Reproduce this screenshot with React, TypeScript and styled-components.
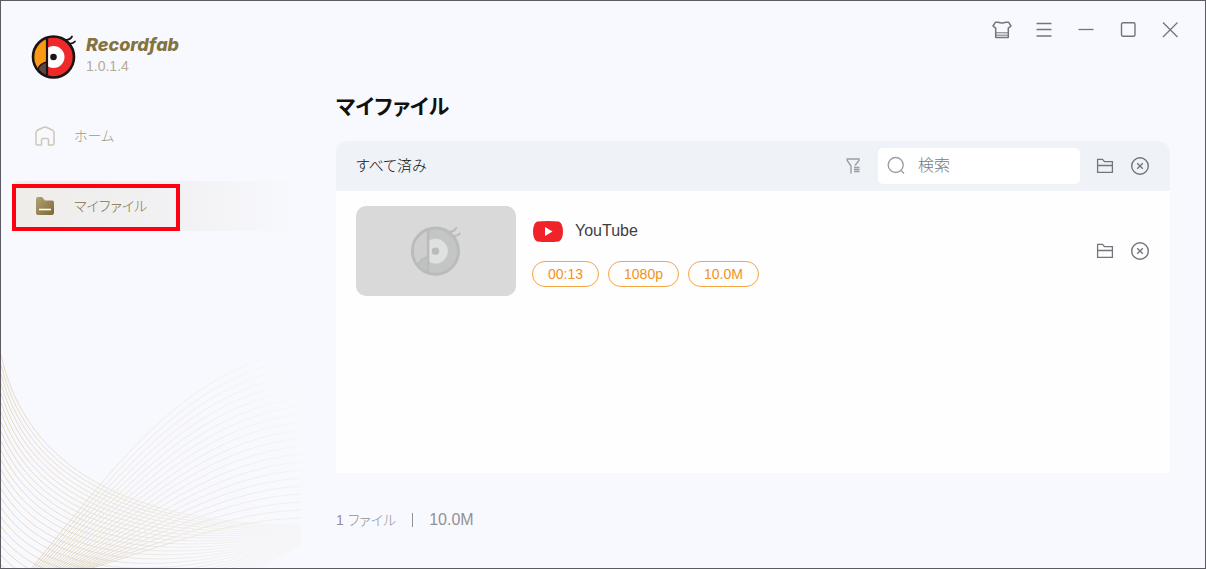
import React from "react";
import styled, { createGlobalStyle } from "styled-components";

const GlobalStyle = createGlobalStyle`
  * { box-sizing: border-box; }
  body {
    margin: 0;
    background: #f8f9fe;
    font-family: "Liberation Sans", "Noto Sans CJK JP", sans-serif;
    font-size: 16px;
    line-height: 20px;
    font-feature-settings: "palt";
  }
  button, input { font: inherit; font-feature-settings: inherit; }
`;

const Window = styled.div`
  display: flex;
  min-height: 100vh;
  border: 1px solid #5c5b63;
  background: #f8f9fe;
`;

const Sidebar = styled.aside`
  position: relative;
  flex: none;
  width: 300px;
  overflow: hidden;
`;

const Brand = styled.div`
  display: flex;
  align-items: center;
  gap: 8px;
  padding: 31px 0 0 29px;
`;

const BrandName = styled.div`
  font-family: Inter, "Open Sans", sans-serif;
  font-size: 18px;
  line-height: 20px;
  font-weight: 800;
  font-style: italic;
  color: #84733f;
`;

const Version = styled.div`
  font-size: 14px;
  line-height: 22px;
  color: #b5ab94;
`;

const Nav = styled.nav`
  display: flex;
  flex-direction: column;
  gap: 20px;
  padding: 31px 0 0 11px;
`;

const NavLink = styled.a<{ $active?: boolean }>`
  position: relative;
  display: flex;
  align-items: center;
  gap: 18px;
  height: 50px;
  padding-left: 22px;
  border-radius: 8px 0 0 8px;
  font-size: 14px;
  font-weight: 300;
  text-decoration: none;
  color: ${(p) => (p.$active ? "#85713f" : "#a39a80")};
  background: ${(p) => (p.$active ? "linear-gradient(90deg, #efede8, #efeff0 30%, #f2f2f4 60%, #f8f9fe)" : "none")};
`;

const Highlight = styled.span`
  position: absolute;
  top: 3px;
  left: 0;
  width: 168px;
  height: 47px;
  border: 4px solid #ff0010;
`;

const WaveArt = styled.svg`
  position: absolute;
  left: 0;
  bottom: 0;
  width: 300px;
  height: 220px;
`;

const Main = styled.main`
  flex: 1;
  display: flex;
  flex-direction: column;
  min-width: 0;
  padding: 0 35px;
`;

const TitleBar = styled.div`
  display: flex;
  justify-content: flex-end;
  gap: 18px;
  padding-top: 17px;
  margin-right: -12px;
`;

const IconButton = styled.button`
  display: flex;
  align-items: center;
  justify-content: center;
  width: 24px;
  height: 24px;
  padding: 0;
  border: 0;
  background: none;
  color: ${(p) => p.color ?? "#73757b"};
`;

const Title = styled.h1`
  margin: 49px 0 18px;
  font-size: 21px;
  line-height: 32px;
  font-weight: 700;
  color: #111;
`;

const Panel = styled.section`
  flex: 1;
  border-radius: 12px 12px 0 0;
  background: #fefeff;
  overflow: hidden;
`;

const PanelHeader = styled.header`
  display: flex;
  align-items: center;
  height: 50px;
  padding: 0 18px 0 20px;
  background: #eff3f8;
`;

const PanelTitle = styled.h2`
  flex: 1;
  margin: 0;
  font-size: 15px;
  font-weight: 300;
  color: #111;
`;

const SearchBox = styled.label`
  display: flex;
  align-items: center;
  gap: 12px;
  width: 202px;
  height: 36px;
  margin: 0 13px;
  padding: 0 8px;
  border-radius: 5px;
  background: #fff;
`;

const SearchInput = styled.input`
  flex: 1;
  min-width: 0;
  padding: 0;
  border: 0;
  outline: 0;
  background: none;
  font-weight: 300;
  color: #333;
  &::placeholder { color: #777a80; opacity: 1; }
`;

const Actions = styled.div`
  display: flex;
  gap: 11px;
`;

const FileRow = styled.article`
  display: flex;
  align-items: center;
  gap: 16px;
  padding: 15px 18px 15px 20px;
`;

const Thumb = styled.div`
  display: flex;
  align-items: center;
  justify-content: center;
  width: 160px;
  height: 90px;
  padding-bottom: 2px;
  border-radius: 10px;
  background: #d9d9d9;
`;

const FileInfo = styled.div`
  flex: 1;
  padding-top: 5px;
`;

const Source = styled.div`
  display: flex;
  align-items: center;
  gap: 12px;
  padding: 0 0 19px 1px;
  color: #3e3f42;
`;

const Tags = styled.div`
  display: flex;
  gap: 9px;
`;

const Tag = styled.span`
  height: 26px;
  padding: 0 15px;
  border: 1px solid #f6a541;
  border-radius: 13px;
  font-size: 14px;
  line-height: 24px;
  color: #f0921e;
`;

const Footer = styled.footer`
  display: flex;
  align-items: center;
  gap: 16px;
  padding: 37px 0 38px;
  font-weight: 300;
  color: #909296;
`;

const FileCount = styled.span`
  font-size: 14px;
`;

const Divider = styled.span`
  width: 1px;
  height: 14px;
  background: #909296;
`;

const parrotColors = {
  line: "#1c1414", face: "#ef2829", beak: "#fb9a12", tip: "#5b4644", eye: "#fff", pupil: "#1c1414",
};
const mutedColors = {
  line: "#b9bbbc", face: "#c4c5c5", beak: "#cecece", tip: "#c0c1c1", eye: "#dfe0e0", pupil: "#b9bbbc",
};

const Parrot = ({ size, colors }: { size: number; colors: typeof parrotColors }) => (
  <svg width={size} height={size} viewBox="0 0 48 48" fill="none" aria-hidden="true">
    <path d="M36 8Q40.500 7.500 42 4.500M39 11.500Q43 12 45 9.500" stroke={colors.line} strokeWidth="1.800" strokeLinecap="round" />
    <circle cx="23.500" cy="25" r="20.500" fill={colors.face} />
    <path d="M17 5.600A20.500 20.500 0 0 0 17 44.400Z" fill={colors.beak} />
    <path d="M7.500 37.500Q10.500 31 17 30V44.400Q11 42.500 7.500 37.500Z" fill={colors.tip} stroke={colors.line} strokeWidth="1.500" />
    <path d="M17 16Q20 14 23.500 14A11 11 0 1 1 23.500 36Q20 36 17 34Z" fill={colors.eye} />
    <path d="M17 6V44" stroke={colors.line} strokeWidth="2.200" />
    <circle cx="23.500" cy="25" r="3.300" fill={colors.pupil} />
    <circle cx="23.500" cy="25" r="20.500" stroke={colors.line} strokeWidth="2.600" />
  </svg>
);

const FolderIcon = () => (
  <svg width="18" height="18" viewBox="0 0 18 18" fill="none" stroke="currentColor" strokeWidth="1.300" aria-hidden="true">
    <path d="M1.600 15.400V2.400H6.500L8.500 4.700H16.400V15.400ZM1.600 8.500H16.400" />
  </svg>
);

const RemoveIcon = () => (
  <svg width="20" height="20" viewBox="0 0 20 20" fill="none" stroke="currentColor" aria-hidden="true">
    <circle cx="10" cy="10" r="8.300" strokeWidth="1.400" />
    <path d="M7.200 7.200L12.800 12.800M12.800 7.200L7.200 12.800" strokeWidth="1.400" />
  </svg>
);

const RowActions = () => (
  <Actions>
    <IconButton type="button" aria-label="Open folder"><FolderIcon /></IconButton>
    <IconButton type="button" aria-label="Remove"><RemoveIcon /></IconButton>
  </Actions>
);

const mix = (a: number[], b: number[], t: number) => a.map((v, i) => v + (b[i] - v) * t);
const toPath = (p: number[]) =>
  `M${p[0]} ${p[1]}C${p[2]} ${p[3]} ${p[4]} ${p[5]} ${p[6]} ${p[7]}`;

const family = (first: number[], last: number[], count: number) =>
  Array.from({ length: count }, (_, i) => toPath(mix(first, last, i / (count - 1))));

const falling = family([0, 7, 22, 105, 105, 176, 300, 177], [0, 236, 60, 290, 180, 270, 300, 196], 25);
const rising = family([29, 222, 110, 125, 180, 20, 300, 2], [85, 222, 170, 195, 230, 172, 300, 170], 22);

const Waves = () => (
  <WaveArt viewBox="0 0 300 220" fill="none" aria-hidden="true">
    <defs>
      <linearGradient id="fall" gradientUnits="userSpaceOnUse" x1="0" y1="0" x2="300" y2="0">
        <stop offset="0" stopColor="#e6d9c2" />
        <stop offset="0.500" stopColor="#ebe3d6" stopOpacity="0.800" />
        <stop offset="1" stopColor="#f1eeea" stopOpacity="0.300" />
      </linearGradient>
      <linearGradient id="rise" gradientUnits="userSpaceOnUse" x1="30" y1="220" x2="300" y2="40">
        <stop offset="0" stopColor="#dfd2ba" />
        <stop offset="0.450" stopColor="#ebe6dd" stopOpacity="0.900" />
        <stop offset="0.750" stopColor="#f0ede9" stopOpacity="0.900" />
        <stop offset="1" stopColor="#f4f2f2" stopOpacity="0.200" />
      </linearGradient>
    </defs>
    {falling.map((d) => <path key={d} d={d} stroke="url(#fall)" />)}
    {rising.map((d) => <path key={d} d={d} stroke="url(#rise)" />)}
  </WaveArt>
);

export default function App() {
  return (
    <Window>
      <GlobalStyle />
      <Sidebar>
        <Waves />
        <Brand>
          <Parrot size={48} colors={parrotColors} />
          <div>
            <BrandName>Recordfab</BrandName>
            <Version>1.0.1.4</Version>
          </div>
        </Brand>
        <Nav>
          <NavLink href="#home">
            <svg width="22" height="22" viewBox="0 0 22 22" fill="none" stroke="#cfc6b6" strokeWidth="1.500" strokeLinejoin="round" aria-hidden="true">
              <path d="M7.500 20H3.500Q2 20 2 18.500V7.500Q2 6 3.300 5.300L9.800 2.300Q11 1.800 12.200 2.300L18.700 5.300Q20 6 20 7.500V18.500Q20 20 18.500 20H14.500V15Q14.500 13.500 13 13.500H9Q7.500 13.500 7.500 15Z" />
            </svg>
            ホーム
          </NavLink>
          <NavLink href="#files" $active>
            <svg width="22" height="22" viewBox="0 0 22 22" aria-hidden="true">
              <defs>
                <linearGradient id="folder" x1="0" y1="0" x2="1" y2="1">
                  <stop offset="0" stopColor="#b3a275" />
                  <stop offset="1" stopColor="#7c6936" />
                </linearGradient>
              </defs>
              <path d="M2 4Q2 2 4 2H8L11 5.500H18Q20 5.500 20 7.500V18Q20 20 18 20H4Q2 20 2 18Z" fill="url(#folder)" />
              <path d="M5 14.500H17" stroke="#fff" strokeWidth="1.600" />
            </svg>
            マイファイル
            <Highlight />
          </NavLink>
        </Nav>
      </Sidebar>
      <Main>
        <TitleBar>
          <IconButton type="button" aria-label="Theme">
            <svg width="20" height="20" viewBox="0 0 20 20" fill="none" stroke="currentColor" strokeWidth="1.500" strokeLinejoin="round" aria-hidden="true">
              <path d="M6 2.200Q10 3.600 14 2.200H16.500L19 6L16.300 8.200V17.500H3.700V8.200L1 6L3.500 2.200Z" />
              <path d="M3.700 12.800H16.300M3.700 15.200H16.300" strokeWidth="1" />
            </svg>
          </IconButton>
          <IconButton type="button" aria-label="Menu">
            <svg width="16" height="16" viewBox="0 0 16 16" stroke="currentColor" strokeWidth="1.300" aria-hidden="true">
              <path d="M0.500 1.500H15.500M0.500 7.500H15.500M0.500 14H15.500" />
            </svg>
          </IconButton>
          <IconButton type="button" aria-label="Minimize">
            <svg width="16" height="16" viewBox="0 0 16 16" stroke="currentColor" strokeWidth="1.300" aria-hidden="true">
              <path d="M0.500 7.500H15.500" />
            </svg>
          </IconButton>
          <IconButton type="button" aria-label="Maximize">
            <svg width="16" height="16" viewBox="0 0 16 16" fill="none" stroke="currentColor" strokeWidth="1.400" aria-hidden="true">
              <rect x="1.500" y="0.800" width="13.500" height="13.500" rx="1.500" />
            </svg>
          </IconButton>
          <IconButton type="button" aria-label="Close">
            <svg width="16" height="16" viewBox="0 0 16 16" stroke="currentColor" strokeWidth="1.300" aria-hidden="true">
              <path d="M1 0.500L15.500 15M15.500 0.500L1 15" />
            </svg>
          </IconButton>
        </TitleBar>
        <Title>マイファイル</Title>
        <Panel>
          <PanelHeader>
            <PanelTitle>すべて済み</PanelTitle>
            <IconButton type="button" aria-label="Filter" color="#9c9fa3">
              <svg width="16" height="18" viewBox="0 0 16 18" fill="none" stroke="currentColor" strokeWidth="1.400" aria-hidden="true">
                <path d="M6 16.500V9L2.200 3.500V2H14V3.500L10 8.500" />
                <path d="M9 10.500H14.500M9 12.500H14.500M9 14.500H14.500" />
              </svg>
            </IconButton>
            <SearchBox>
              <svg width="20" height="20" viewBox="0 0 20 20" fill="none" stroke="#9c9fa3" strokeWidth="1.400" aria-hidden="true">
                <circle cx="9.700" cy="9" r="7.500" />
                <path d="M15.200 14.500L18 17.500" />
              </svg>
              <SearchInput type="search" placeholder="検索" aria-label="検索" />
            </SearchBox>
            <RowActions />
          </PanelHeader>
          <FileRow>
            <Thumb><Parrot size={54} colors={mutedColors} /></Thumb>
            <FileInfo>
              <Source>
                <svg width="30" height="21" viewBox="0 0 30 21" aria-hidden="true">
                  <path d="M4 0.500Q15 -0.300 26 0.500Q30 3 30 10.500Q30 18 26 20.500Q15 21.500 4 20.500Q0 18 0 10.500Q0 3 4 0.500Z" fill="#f02428" />
                  <path d="M12 6L19.500 10.500L12 15Z" fill="#fff" />
                </svg>
                YouTube
              </Source>
              <Tags>
                <Tag>00:13</Tag>
                <Tag>1080p</Tag>
                <Tag>10.0M</Tag>
              </Tags>
            </FileInfo>
            <RowActions />
          </FileRow>
        </Panel>
        <Footer>
          <FileCount>1 ファイル</FileCount>
          <Divider />
          <span>10.0M</span>
        </Footer>
      </Main>
    </Window>
  );
}
